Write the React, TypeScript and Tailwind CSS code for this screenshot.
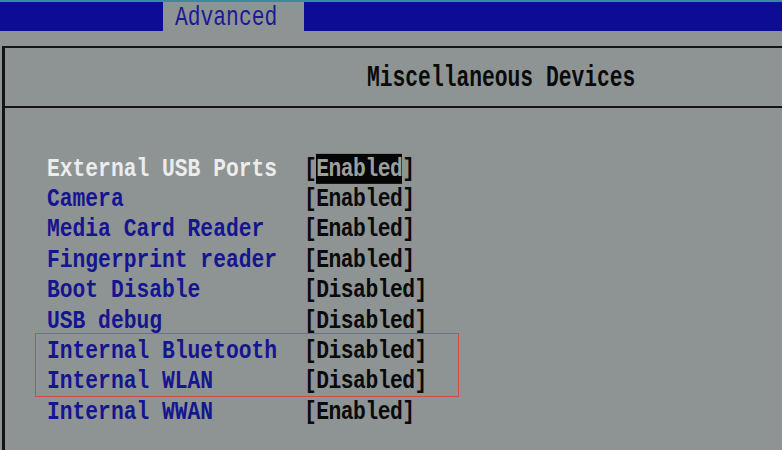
const rows = [
  { label: "External USB Ports", value: "Enabled", selected: true },
  { label: "Camera", value: "Enabled" },
  { label: "Media Card Reader", value: "Enabled" },
  { label: "Fingerprint reader", value: "Enabled" },
  { label: "Boot Disable", value: "Disabled" },
  { label: "USB debug", value: "Disabled" },
  { label: "Internal Bluetooth", value: "Disabled" },
  { label: "Internal WLAN", value: "Disabled" },
  { label: "Internal WWAN", value: "Enabled" },
];

type Row = { label: string; value: string; selected?: boolean };

function Item({ row }: { row: Row }) {
  return (
    <div className="flex h-[30.4px] items-center">
      <div className="w-[257px]">
        <span
          className={
            "inline-block origin-center scale-y-[1.25] leading-[0.8] " +
            (row.selected ? "text-[#ececec]" : "text-[#15158f]")
          }
        >
          {row.label}
        </span>
      </div>
      <span className="inline-block origin-center scale-y-[1.25] leading-[0.8] tracking-[-0.5px] text-[#0a0a0a]">
        [
        {row.selected ? (
          <span className="bg-[#050505] text-[#9aa0a0]">{row.value}</span>
        ) : (
          row.value
        )}
        ]
      </span>
    </div>
  );
}

export default function App() {
  return (
    <div className="flex h-[450px] w-[782px] flex-col overflow-hidden bg-[#8e9494] font-['Liberation_Mono',monospace] text-[21.3px] font-bold leading-none">
      <div className="flex h-[31px] shrink-0 border-t-2 border-[#3d8a9a] bg-[#0c0c94]">
        <div className="w-[163px]" />
        <div className="flex w-[141px] items-center bg-[#8e9494] pl-[12px] pt-[2px]">
          <span className="inline-block origin-center scale-y-[1.3] font-normal text-[#1a1a96]">
            Advanced
          </span>
        </div>
      </div>
      <div className="ml-[2px] mt-[15px] flex-1 border-l-[3px] border-t-2 border-[#141414]">
        <div className="flex h-[60px] items-center border-b-2 border-[#141414] pl-[362px] pt-[3px] text-[#0a0a0a]">
          <span className="inline-block origin-center scale-y-[1.42]">Miscellaneous Devices</span>
        </div>
        <div className="pl-[42px] pt-[46px]">
          {rows.slice(0, 6).map((r) => (
            <Item key={r.label} row={r} />
          ))}
          <div className="relative">
            <span className="absolute -top-[3px] left-[-12px] h-[64px] w-[424px] border border-[#d04a4a]" />
            {rows.slice(6, 8).map((r) => (
              <Item key={r.label} row={r} />
            ))}
          </div>
          <Item row={rows[8]} />
        </div>
      </div>
    </div>
  );
}
